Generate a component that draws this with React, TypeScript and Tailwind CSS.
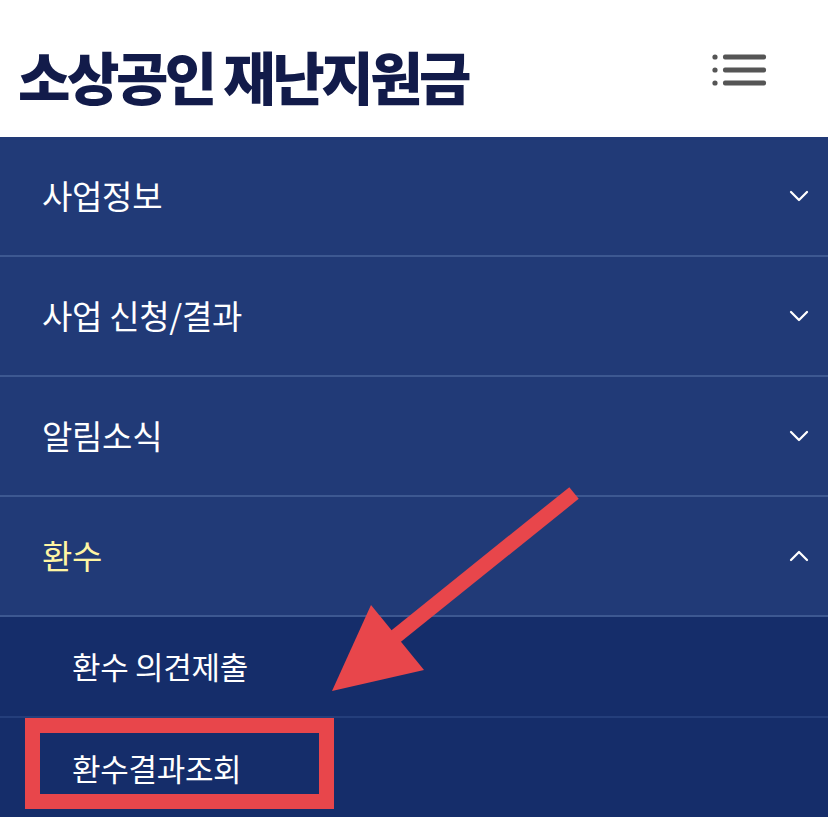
import { ChevronDown, ChevronUp } from 'lucide-react';

const font = { fontFamily: '"Noto Sans CJK KR", "Noto Sans", sans-serif' };

const menus = [
	{ label: '사업정보', open: false },
	{ label: '사업 신청/결과', open: false },
	{ label: '알림소식', open: false },
	{ label: '환수', open: true },
];

const subs = ['환수 의견제출', '환수결과조회'];

export default function App() {
	return (
		<div className="relative w-[828px] h-[817px] overflow-hidden bg-[#152d6a]" style={font}>
			<header className="h-[137px] bg-white flex items-center justify-between pl-[18px] pr-[60px]">
				<h1 className="text-[57px] font-black text-[#121b4a] tracking-[-3.5px] leading-none mt-[14px]">
					소상공인 재난지원금
				</h1>
				<svg width="56" height="34" viewBox="0 0 56 34" className="mt-[2px]">
					<circle cx="3" cy="4" r="2.6" fill="#555" />
					<circle cx="3" cy="17" r="2.6" fill="#555" />
					<circle cx="3" cy="30" r="2.6" fill="#555" />
					<rect x="11" y="1.5" width="43" height="5" rx="2" fill="#555" />
					<rect x="11" y="14.5" width="43" height="5" rx="2" fill="#555" />
					<rect x="11" y="27.5" width="43" height="5" rx="2" fill="#555" />
				</svg>
			</header>

			<nav className="bg-[#213a77]">
				{menus.map((m) => (
					<div
						key={m.label}
						className="h-[120px] flex items-center justify-between pl-[42px] pr-[13px] border-b-2 border-[#3d5891]"
					>
						<span className={`text-[33px] tracking-[-0.3px] ${m.open ? 'text-[#fff5a3]' : 'text-white'}`}>
							{m.label}
						</span>
						{m.open ? (
							<ChevronUp size={32} strokeWidth={1.7} className="text-white" />
						) : (
							<ChevronDown size={32} strokeWidth={1.7} className="text-white" />
						)}
					</div>
				))}
			</nav>

			<ul className="bg-[#152d6a]">
				{subs.map((s, i) => (
					<li
						key={s}
						className={`h-[101px] flex items-center pl-[72px] ${i === 0 ? 'border-b-2 border-[#243e7b]' : ''}`}
					>
						<span className="text-[31px] text-white tracking-[-0.3px]">{s}</span>
					</li>
				))}
			</ul>

			{/* annotation overlay */}
			<div className="absolute left-[25px] top-[718px] w-[309px] h-[91px] border-[15px] border-[#e8464b]" />
			<svg className="absolute left-0 top-0" width="828" height="817" viewBox="0 0 828 817">
				<line x1="574" y1="493" x2="395" y2="637" stroke="#e8464b" strokeWidth="15" />
				<polygon points="371,605 332,691 424,670" fill="#e8464b" />
			</svg>
		</div>
	);
}
